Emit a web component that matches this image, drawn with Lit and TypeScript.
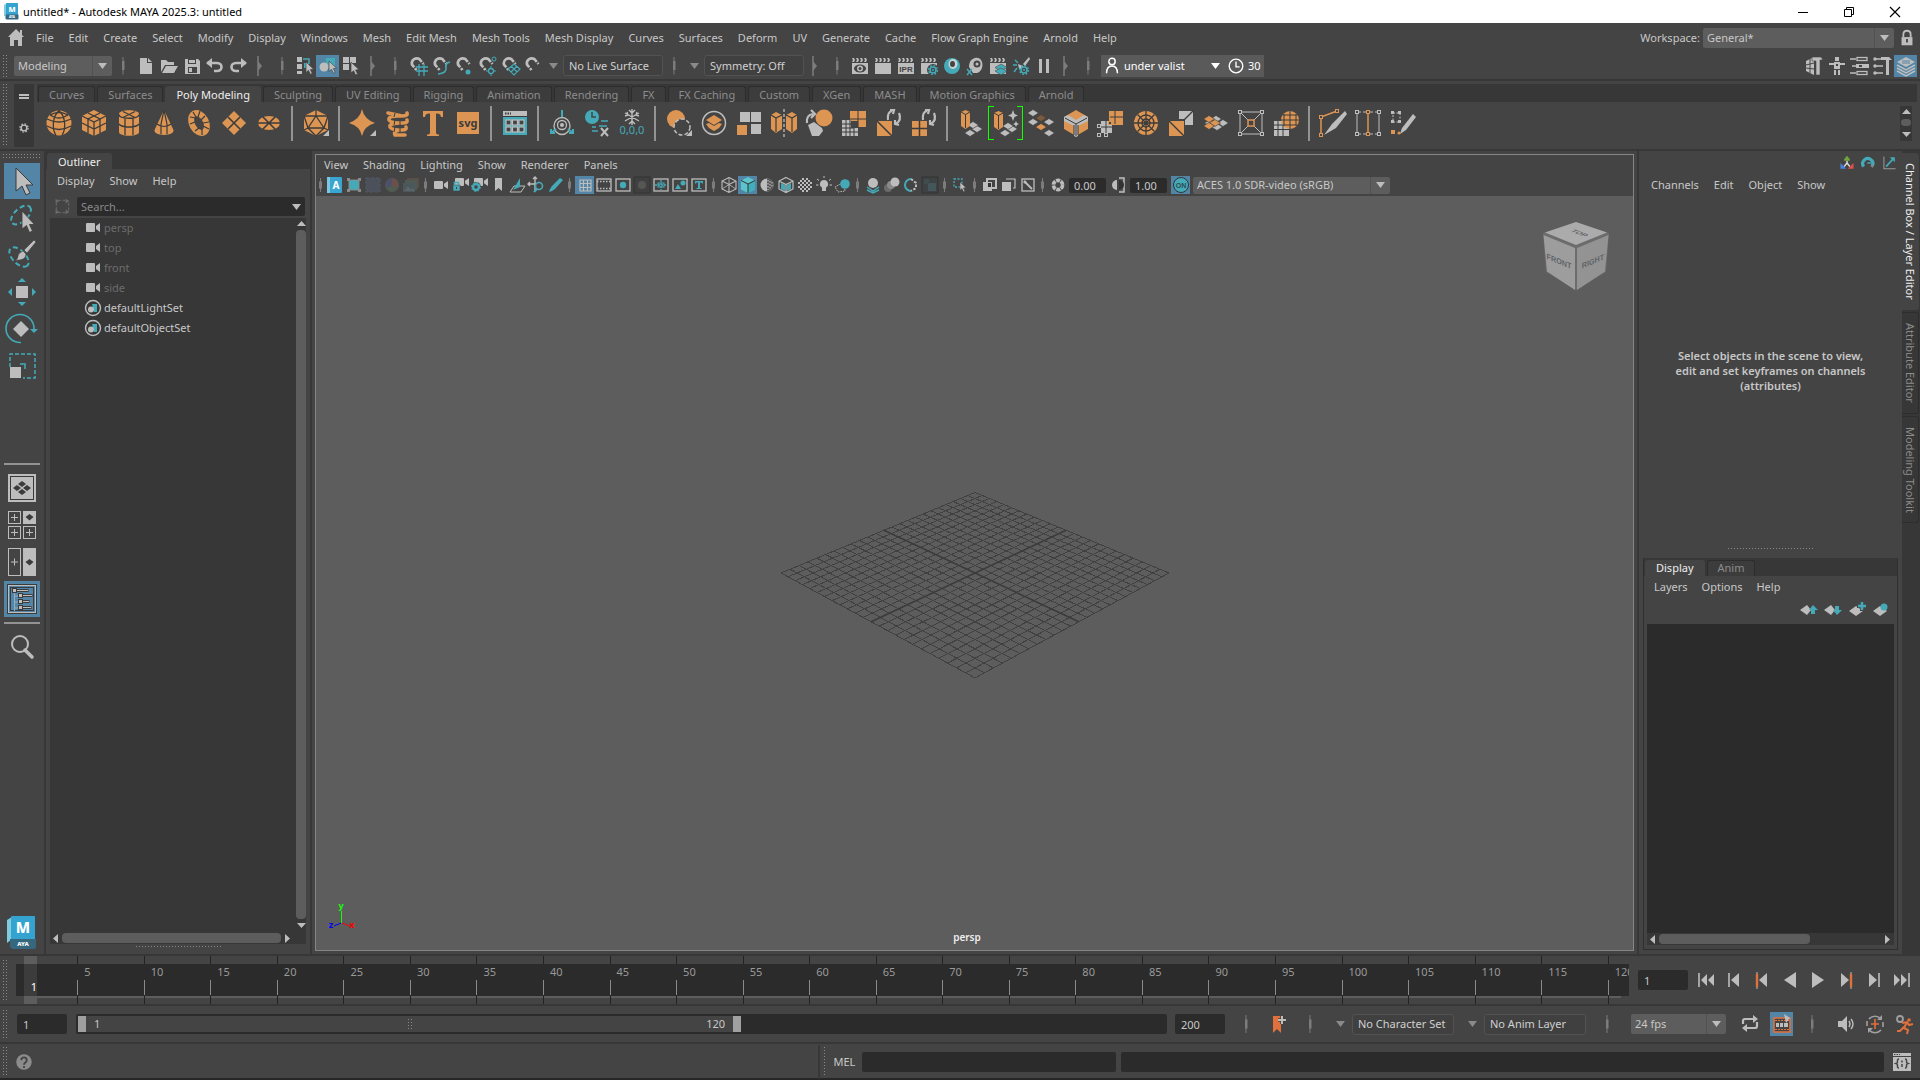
import { LitElement, html, svg, css, nothing } from "lit";
import type { TemplateResult, SVGTemplateResult } from "lit";
import { customElement, state } from "lit/decorators.js";
import { classMap } from "lit/directives/class-map.js";

const G = "#bdbdbd";
const O = "#dc9552";
const T = "#45aab8";
const D = "#3b3b3b";
const R = "#e0703c";

/* ---------- shared icon parts ---------- */
const clap = (extra: SVGTemplateResult) => svg`
  <rect x="3" y="8" width="16" height="11" fill=${G}/>
  <path d="M3 3h2l1 2H4zM7 3h2l1 2H8zM11 3h2l1 2h-2zM15 3h2l1 2h-2zM4 5h2L5 7H3zM8 5h2L9 7H7zM12 5h2l-1 2h-2zM16 5h2l-1 2h-2z" fill=${G}/>${extra}`;
const gear = (x: number, y: number, c: string) => svg`
  <circle cx=${x} cy=${y} r="3" fill="#444" stroke=${c} stroke-width="1.6"/>
  <circle cx=${x} cy=${y} r="4.4" fill="none" stroke=${c} stroke-width="1.4" stroke-dasharray="1.7 1.75"/>
  <circle cx=${x} cy=${y} r="1" fill=${c}/>`;
const magnet = (extra: SVGTemplateResult | typeof nothing) => svg`
  <path d="M9.500 15L5 9.500A4.900 4.900 0 0 1 12.500 4.200L16.500 9" fill="none" stroke=${G} stroke-width="2.700"/>
  <path d="M6 14l4-3M12.500 9.500l4-3" stroke="#444" stroke-width="1.200"/>${extra}`;
const cursor = (x: number, y: number, s = 1) => svg`
  <path d="M0 0v11l2.6-2.2 2 4.2 2-1-2-4 3.4-.4z" transform="translate(${x} ${y}) scale(${s})" fill=${G} stroke="#444" stroke-width=".7"/>`;
const cam = (x: number, y: number) => svg`
  <rect x=${x} y=${y} width="9" height="8" rx="1" fill=${G}/><path d="M${x + 14} ${y}v8l-4-2.800v-2.400z" fill=${G}/>`;
const tile = (x: number, y: number, c: string) => svg`<path d="M${x} ${y - 3.5}l5.500 3.500-5.500 3.500-5.500-3.500z" fill=${c} stroke=${D} stroke-width=".6"/>`;
const node = (x: number, y: number, c: string) => svg`<rect x=${x - 1.5} y=${y - 1.5} width="3" height="3" fill="#444" stroke=${c}/>`;
const pillar = (x: number, y: number) => svg`
  <path d="M${x} ${y + 2}l4.500-2 4.500 2v14l-4.500 3-4.500-3z" fill=${O}/><path d="M${x} ${y + 2}l4.500 2.500 4.500-2.500M${x + 4.5} ${y + 4}v14" fill="none" stroke=${D}/>`;
const cubeLine = (c: string, w = 1.2) => svg`<path d="M9 1.500l7 3.500v8l-7 3.500-7-3.500V5zM2 5l7 3.500L16 5M9 8.500V16.500" fill="none" stroke=${c} stroke-width=${w}/>`;

/* ---------- shelf icons, 28 x 28 ---------- */
const SHELF: Record<string, SVGTemplateResult> = {
  sphere: svg`<circle cx="14" cy="14" r="12.500" fill=${O}/><g fill="none" stroke=${D} stroke-width="1.300"><path d="M2 10q12 6 24 0M2 17q12 7 24 0M5 6q9-5 18 0"/><path d="M14 1.500C7 8 7 20 11 26.500M14 1.500C21 8 21 20 17 26.500M5 6q9 6 18 0"/></g>`,
  cube: svg`<path d="M14 1l12 6v14l-12 6-12-6V7z" fill=${O}/><g fill="none" stroke=${D} stroke-width="1.300"><path d="M2 7l12 6 12-6M14 13v14M8 4l12 6v14M20 4L8 10v14M2 14l12 6 12-6"/></g>`,
  cylinder: svg`<path d="M4 5c0-5 20-5 20 0v18c0 5-20 5-20 0z" fill=${O}/><g fill="none" stroke=${D} stroke-width="1.300"><path d="M4 5.500c0 5 20 5 20 0M4 15c3 4 17 4 20 0M10 9v17M18 9v17M8 2.500l12 6M20 2.500l-12 6"/></g>`,
  cone: svg`<path d="M14 1l9.500 20c1 6.500-20 6.500-19 0z" fill=${O}/><path d="M14 1l-3 14v10M14 1l3 14v10M7 15q7 5 14 0" fill="none" stroke=${D} stroke-width="1.200"/>`,
  torus: svg`<ellipse cx="14" cy="14" rx="7" ry="10.500" transform="rotate(-28 14 14)" fill="none" stroke=${O} stroke-width="6"/><g stroke=${D} stroke-width="1.200"><path d="M5 8l6 1M8 3l3 5M15 2l-2 6M20 7l-4 4M24 13l-6 1M24 20l-6-3M17 26l0-6M10 22l4-3M5 15l5-2"/></g>`,
  plane: svg`<path d="M14 2l12 12-12 12L2 14z" fill=${O}/><path d="M8 8l12 12M20 8L8 20" stroke=${D} stroke-width="1.600"/>`,
  disc: svg`<ellipse cx="14" cy="14" rx="11" ry="7" fill=${O}/><path d="M3 14h22M8 8l12 12M20 8L8 20" stroke=${D} stroke-width="1.600"/>`,
  platonic: svg`<path d="M14 1l12 6v14l-12 6-12-6V7z" fill=${O}/><g fill="none" stroke=${D} stroke-width="1.300"><path d="M14 7l8 12H6zM14 1v6M2 7l12 0 12 0M2 7l4 12-4 2M26 7l-4 12 4 2M6 19l8 8 8-8"/></g><path d="M27 21v6h-6z" fill=${G}/>`,
  supershape: svg`<path d="M13 0q2 10 13 14-11 3-13 13Q11 17 0 14 11 10 13 0z" fill=${O}/><path d="M27 21v6h-6z" fill=${G}/>`,
  helix: svg`<g fill="none" stroke=${O} stroke-width="3.600" stroke-linecap="round"><path d="M4 4l14 3q6 0 5-3M18 7q-14-1-13 4 1 3 14 3 5 0 4-3M17 14q-12 0-11 4 1 3 12 3 5 0 4-3M16 21q-7 1-5 5h10"/></g><g stroke=${D} stroke-width="1"><path d="M11 4l-1 4M16 12v5M11 11l-1 5M16 19v5M11 18l-1 5"/></g>`,
  type: svg`<path d="M4 2h20v6h-2c-.5-3-2-3.500-5-3.500v19c0 1.500 1 2 3 2V27H8v-1.500c2 0 3-.5 3-2v-19C8 4.500 6.500 5 6 8H4z" fill=${O}/>`,
  svg: svg`<rect x="3" y="3" width="22" height="22" fill=${O}/><text x="14" y="18" text-anchor="middle" font-size="11" font-weight="700" fill="#3b3b3b" font-family="Noto Sans, sans-serif">svg</text>`,
  panel: svg`<rect x="2" y="2" width="24" height="24" fill=${T}/><rect x="2" y="2" width="24" height="5" fill=${G}/><path d="M4 4.500h6" stroke=${D} stroke-width="2" stroke-dasharray="1.500 1"/><rect x="2" y="7" width="24" height="1" fill=${D}/><g fill="#444" stroke=${G} stroke-width="1.200"><rect x="5" y="11" width="5" height="5"/><rect x="11.500" y="11" width="5" height="5"/><rect x="18" y="11" width="5" height="5"/><rect x="5" y="18" width="5" height="5"/><rect x="11.500" y="18" width="5" height="5"/><rect x="18" y="18" width="5" height="5"/></g>`,
  pivot: svg`<ellipse cx="14" cy="17" rx="8" ry="8.500" fill="none" stroke=${G} stroke-width="1.300"/><path d="M14 1v7M8 20l-5 4M20 20l5 4M3 20v4h4M25 20v4h-4" stroke=${T} stroke-width="2" fill="none"/><circle cx="14" cy="16" r="4.500" fill="#444" stroke=${G} stroke-width="1.300"/><circle cx="14" cy="16" r="2" fill=${G}/>`,
  history: svg`<circle cx="9" cy="8" r="7" fill=${T}/><path d="M9 3v5h4" fill="none" stroke="#444" stroke-width="1.500"/><path d="M9 18h4M18 12h7M9 22h6M16 17h8" stroke=${T} stroke-width="1.500"/><path d="M18 19l7 8M25 19l-7 8" stroke=${G} stroke-width="2"/>`,
  freeze: svg`<g stroke=${G} stroke-width="1.400" fill="none"><path d="M14 0v16M7 4l14 8M21 4L7 12M11 1l3 3 3-3M11 15l3-3 3 3M7 7l3-1-1-3M21 7l-3-1 1-3"/></g><text x="14" y="25" text-anchor="middle" font-size="11" fill=${T} font-family="Noto Sans, sans-serif">0,0,0</text>`,
  combine: svg`<circle cx="11" cy="10" r="9" fill=${O}/><circle cx="17" cy="18" r="8" fill="#444" stroke=${G} stroke-width="1.500" stroke-dasharray="4 2"/><path d="M27 21v6h-6z" fill=${G}/>`,
  extract: svg`<circle cx="14" cy="14" r="11.500" fill="none" stroke=${G} stroke-width="1.500"/><path d="M14 6l8 5-8 5-8-5z" fill=${O}/><path d="M6 15l3-1 5 3 5-3 3 1-3 4-5 3-5-3z" fill=${O}/>`,
  separate: svg`<g fill=${G}><rect x="5" y="3" width="10" height="10"/><rect x="16" y="3" width="10" height="10"/><rect x="16" y="15" width="10" height="10"/></g><rect x="2" y="16" width="10" height="10" fill=${O}/>`,
  mirror: svg`<path d="M14 0v28" stroke=${G} stroke-width="1.300" stroke-dasharray="3 2"/><path d="M1 6l5-3 6 3v14l-6 4-5-4zM27 6l-5-3-6 3v14l6 4 5-4z" fill=${O}/><path d="M1 6l5 3 6-3M6 9v14M27 6l-5 3-6-3M22 9v14" fill="none" stroke=${D} stroke-width="1.200"/>`,
  smooth: svg`<circle cx="19" cy="9" r="8.500" fill=${O}/><path d="M3 16l6-3 8 6 1 3-4 5H7z" fill=${G}/><path d="M2 14q-1-8 6-9M6 1l4 4-4 4" fill="none" stroke=${G} stroke-width="2.200"/>`,
  reduce: svg`<path d="M10 2h16v16h-8v-6h-8z" fill=${O}/><path d="M18 2v16M10 10h16" stroke=${D}/><path d="M2 11h9v8h7v8H2z" fill=${G}/><path d="M6 11v16M10 11v16M14 19v8M2 15h10M2 19h12M2 23h16" stroke=${D}/>`,
  triangulate: svg`<rect x="2" y="12" width="15" height="15" fill=${O}/><path d="M2 12l15 15" stroke=${D} stroke-width="1.500"/><path d="M13 11q-1-8 4-9M15 1l4 0-1 4M24 4q3 7-3 11M24 16l-4-1 0-4" fill="none" stroke=${G} stroke-width="2.200"/>`,
  quad: svg`<rect x="2" y="12" width="15" height="15" fill=${O}/><path d="M9.500 12v15M2 19.500h15" stroke=${D} stroke-width="1.500"/><path d="M13 11q-1-8 4-9M15 1l4 0-1 4M24 4q3 7-3 11M24 16l-4-1 0-4" fill="none" stroke=${G} stroke-width="2.200"/>`,
  extrude: svg`${tile(13, 24, G)}${tile(20, 20, G)}${tile(16, 16, G)}${pillar(4, 1)}`,
  smart: svg`${tile(13, 24, G)}${tile(20, 20, G)}${tile(16, 17, G)}${pillar(2, 2)}<path d="M21 1l1.500 4 3.500 1.500-3.500 1.500L21 12l-1.500-4L16 6.500 19.500 5zM24 12l1 2 2 1-2 1-1 2-1-2-2-1 2-1z" fill=${G}/>`,
  bridge: svg`${tile(6, 4, G)}${tile(14, 9, "#7a5a3c")}${tile(22, 13, G)}${tile(6, 13, G)}${tile(14, 18, O)}${tile(22, 24, G)}`,
  bevel: svg`<path d="M14 1l12 7v12l-12 7-12-7V8z" fill=${O}/><path d="M2 8l4-2 8 5 8-5 4 2v4l-10 5v10l-2 1-2-1V17L2 12z" fill=${G}/><path d="M3 9l11 6 11-6M14 15v12M12 16v10M16 16v10" fill="none" stroke=${D}/>`,
  merge: svg`<path d="M12 2h14v14H15l-3-4z" fill=${O}/><path d="M18 2v13M13 8h13" stroke=${D}/><path d="M4 12h8v3h3v9H4z" fill=${G}/><path d="M9 12v12M4 18h11" stroke=${D}/>${node(2, 17, G)}${node(2, 26, G)}${node(9, 26, G)}${node(13, 14, O)}`,
  circularize: svg`<circle cx="14" cy="14" r="12" fill=${O}/><g fill="none" stroke=${D} stroke-width="1.300"><circle cx="14" cy="14" r="8"/><circle cx="14" cy="14" r="4"/><path d="M14 2v24M2 14h24M5.500 5.500l17 17M22.500 5.500l-17 17"/></g>`,
  fill: svg`<path d="M12 2h14v14h-8V10h-6z" fill=${G}/><rect x="2" y="12" width="15" height="15" fill=${O}/><path d="M2 12l15 15M17 11l9-9" stroke=${D} stroke-width="1.400"/>`,
  duplicate: svg`${tile(14, 10, G)}${tile(21, 14, G)}${tile(8, 14, G)}${tile(15, 18, G)}${tile(7, 10, O)}${tile(13, 14, O)}${tile(7, 17, O)}`,
  connect: svg`<path d="M3 3h22v22H3z" fill="none" stroke=${G}/><path d="M3 3l22 22M25 3L3 25" stroke=${G}/>${node(3, 3, G)}${node(25, 3, G)}${node(3, 25, G)}${node(25, 25, G)}<rect x="11" y="11" width="6" height="6" fill="#444" stroke=${O} stroke-width="1.500"/>`,
  project: svg`<path d="M2 12h15v15H2z" fill=${G}/><path d="M6 12v15M11 12v15M2 16h15M2 20.500h15" stroke=${D}/><circle cx="18" cy="11" r="9" fill=${O}/><path d="M18 2v18M9 11h18M12 5v12M24 5v12M11 6h14M11 16h14" stroke=${D}/>`,
  multicut: svg`<path d="M2 26V8l16-6" fill="none" stroke=${O} stroke-width="1.500"/>${node(2, 8, O)}${node(18, 2, O)}${node(2, 26, O)}<path d="M26 2l2 3-11 14-12 7 8-11z" fill=${G}/>`,
  insertloop: svg`<path d="M3 3v22M25 3v22" stroke=${G}/><path d="M3 3h22M3 25h22" stroke=${G} stroke-dasharray="4 2"/><path d="M14 3v22" stroke=${O} stroke-width="1.500"/>${node(3, 3, G)}${node(25, 3, G)}${node(3, 25, G)}${node(25, 25, G)}${node(14, 3, O)}${node(14, 25, O)}`,
  quaddraw: svg`<path d="M4 4h7v9H4z" fill="none" stroke=${G} stroke-dasharray="2 1.500"/><g fill=${G}><rect x="2" y="2" width="3" height="3"/><rect x="9" y="2" width="3" height="3"/><rect x="2" y="11" width="3" height="3"/><rect x="9" y="11" width="3" height="3"/></g><rect x="2" y="21" width="4" height="4" fill=${O}/><path d="M24 5l3 3-10 13-6 4 2-6z" fill=${G}/><circle cx="10" cy="24" r="1.500" fill=${O}/>`,
};

/* ---------- status line icons, 22 x 22 ---------- */
const SMALL: Record<string, SVGTemplateResult> = {
  home: svg`<path d="M11 2l8 8h-2v9h-4v-6H9v6H5v-9H3z" fill=${G}/><path d="M15 3h2v5h-2z" fill=${G}/>`,
  file: svg`<path d="M5 3h7v5h5v11H5z" fill=${G}/><path d="M13 3l4 4h-4z" fill=${G}/>`,
  open: svg`<path d="M3 17V5h5l2 2h6v3H7z" fill=${G}/><path d="M8 11h12l-4 7H4z" fill=${G}/>`,
  save: svg`<path d="M4 4h13l2 2v13H4z" fill=${G}/><rect x="7" y="4" width="8" height="5" fill="#444"/><rect x="8" y="5" width="6" height="3" fill=${G}/><rect x="7" y="12" width="9" height="6" fill="#444"/><rect x="8" y="13" width="3" height="4" fill=${G}/>`,
  undo: svg`<path d="M3 8h10c6 0 6 8 0 8h-3" fill="none" stroke=${G} stroke-width="2.600"/><path d="M2 8l6-5v10z" fill=${G}/>`,
  redo: svg`<path d="M19 8H9c-6 0-6 8 0 8h3" fill="none" stroke=${G} stroke-width="2.600"/><path d="M20 8l-6-5v10z" fill=${G}/>`,
  hierarchy: svg`<g fill=${G}><rect x="3" y="2" width="5" height="5"/><rect x="3" y="9" width="5" height="5"/><rect x="3" y="16" width="5" height="3"/></g><path d="M9 4h6v5" stroke=${T} stroke-width="1.500" fill="none"/><rect x="10" y="8" width="5" height="5" fill=${T}/>${cursor(12, 7, 0.95)}`,
  object: svg`<path d="M9 3h9v10H9z" fill=${T}/><circle cx="7" cy="12" r="4.500" fill=${G}/>${cursor(12, 6, 0.95)}`,
  component: svg`<g fill=${G}><rect x="3" y="2" width="6" height="6"/><rect x="10" y="2" width="6" height="6"/><rect x="3" y="9" width="6" height="6"/></g>${cursor(11, 7, 1)}`,
  snapgrid: magnet(svg`<path d="M9 12h12M9 16h12M12 9v12M17 9v12" stroke=${T} stroke-width="1.300"/>`),
  snapcurve: magnet(svg`<path d="M8 19q9-1 8-6t4-6" fill="none" stroke=${T} stroke-width="1.600"/>`),
  snappoint: magnet(svg`<circle cx="15" cy="17" r="2.500" fill=${T}/>`),
  snapcenter: magnet(svg`<circle cx="18" cy="4" r="2" fill="none" stroke=${T}/><circle cx="15" cy="16" r="2.500" fill="none" stroke=${T} stroke-width="1.300"/><path d="M15 11v3M15 18v3M10 16h3M17 16h3" stroke=${T}/>`),
  snapplane: magnet(svg`<path d="M9 14l6-5 6 5-6 6zM12 11l6 6M18 11l-6 6" fill="none" stroke=${T} stroke-width="1.200"/>`),
  makelive: magnet(nothing),
  renderview: clap(svg`<ellipse cx="11" cy="13.500" rx="6" ry="4" fill="#444"/><circle cx="11" cy="13.500" r="3" fill=${G}/><circle cx="11" cy="13.500" r="1.500" fill="#444"/>`),
  render: clap(svg``),
  ipr: clap(svg`<text x="11" y="17" text-anchor="middle" font-size="8" font-weight="700" fill="#444" font-family="Liberation Sans, sans-serif">IPR</text>`),
  rendersettings: clap(svg`<circle cx="15" cy="15" r="6" fill="#444"/>${gear(15, 15, T)}`),
  hypershade: svg`<circle cx="11" cy="11" r="8" fill=${T}/><ellipse cx="12" cy="9" rx="4.500" ry="5" fill="#c8d4d6"/><ellipse cx="11.500" cy="9" rx="2.500" ry="3" fill="#444"/>`,
  rendersetup: svg`<path d="M11 3c9-2 10 13 2 15H9L5 12C5 7 7 4 11 3z" fill=${G}/><circle cx="13" cy="9" r="3.500" fill="#444"/><circle cx="13" cy="9" r="1.500" fill=${G}/><path d="M3 14l5 6M8 14l-5 6" stroke=${T} stroke-width="1.500"/>`,
  layers: clap(svg`<path d="M14 9l6 3.500-6 3.500-6-3.500z" fill=${T} stroke="#444" stroke-width=".6"/><path d="M8 16l6-3 6 3-6 4z" fill=${T} stroke="#444" stroke-width=".6"/>`),
  lighteditor: svg`<path d="M19 2l-6 7 2 2 5-7zM8 9l5 2 1 4-5-1z" fill=${G}/><path d="M3 10h4M5 5l3 3M7 13l-3 4" stroke=${T} stroke-width="1.400"/>${gear(14, 15, T)}`,
  pause: svg`<path d="M6 4h3v14H6zM13 4h3v14h-3z" fill=${G}/>`,
  modeltool: svg`<path d="M3 6l8-4v18l-8-4z" fill=${G}/><path d="M3 10l8-2M3 13l8 1M7 4v14" stroke="#444"/><path d="M9 2h9l2 3h-3v15h-4V6h-4z" fill=${G} stroke="#444" stroke-width=".6"/>`,
  human: svg`<g fill=${G}><rect x="9" y="2" width="4" height="4"/><rect x="3" y="8" width="16" height="2"/><rect x="8" y="7" width="6" height="7"/><rect x="8" y="15" width="2" height="5"/><rect x="12" y="15" width="2" height="5"/></g><rect x="10" y="9" width="2" height="2" fill="#444"/>`,
  attributes: svg`<g fill="none" stroke=${G} stroke-width="1.300"><path d="M1 4h6M3 11h4M1 18h6"/><rect x="8" y="2.500" width="10" height="3"/><rect x="8" y="16.500" width="10" height="3"/></g><rect x="7" y="9" width="13" height="4" fill=${G}/><rect x="10" y="10" width="3" height="2" fill="#444"/>`,
  toolsettings: svg`<g stroke=${G} stroke-width="1.500" fill=${G}><path d="M3 4h6M3 11h8M3 18h8"/><circle cx="3" cy="4" r="1"/><circle cx="3" cy="11" r="1"/><circle cx="3" cy="18" r="1"/></g><path d="M9 2h8l3 3h-3v15h-3V5H9z" fill=${G}/>`,
  channelbox: svg`<path d="M11 2l9 5-9 5-9-5z" fill=${G}/><path d="M2 10l9 5 9-5M2 13l9 5 9-5M2 16l9 5 9-5" fill="none" stroke=${G} stroke-width="1.500"/><path d="M7 6h8M7 8h8" stroke="#5285a6"/>`,
};

/* ---------- viewport toolbar icons, 18 x 18 ---------- */
const frame = (extra: SVGTemplateResult) => svg`<rect x="2" y="3" width="14" height="12" fill="none" stroke=${G} stroke-width="1.300"/>${extra}`;
const VIEW: Record<string, SVGTemplateResult> = {
  arnold: svg`<rect x="1" y="1" width="15" height="16" rx="1" fill="#3aa5d0"/><path d="M1 1h3v16H1z" fill="#7cc8e2"/><text x="10" y="13" text-anchor="middle" font-size="10" font-weight="700" fill="#fff" font-family="Noto Sans, sans-serif">A</text>`,
  select: svg`<rect x="4" y="4" width="10" height="10" fill=${T} stroke="#8a8a8a"/><g fill="#8a8a8a"><rect x="2" y="2" width="3" height="3"/><rect x="13" y="2" width="3" height="3"/><rect x="2" y="13" width="3" height="3"/><rect x="13" y="13" width="3" height="3"/></g>`,
  paste: svg`<rect x="2" y="2" width="14" height="14" fill="#4b505a" stroke="#505b6a" stroke-dasharray="3 2"/>`,
  color: svg`<circle cx="9" cy="9" r="7" fill="#505c52"/><path d="M9 9V2a7 7 0 0 1 6 10z" fill="#6a4f4a"/><path d="M9 9L3 12.500A7 7 0 0 1 9 2z" fill="#504f68"/>`,
  stack: svg`<path d="M5 2h12v10H5z" fill="#584e4a"/><path d="M3 4h12v10H3z" fill="#4f5a52"/><path d="M1 7h12v9H1z" fill="#4a585e"/><path d="M2 15l4-5 3 4 2-2 2 3z" fill="#5c6468"/>`,
  camera: cam(2, 5),
  cameralock: svg`${cam(4, 2)}<rect x="2" y="9" width="7" height="6" fill=${T} stroke="#444" stroke-width=".6"/><path d="M3.500 9V6.500h4V9" fill="none" stroke=${T} stroke-width="1.500"/><rect x="5" y="11" width="1" height="2" fill="#444"/>`,
  cameragear: svg`${cam(4, 2)}<circle cx="6" cy="11" r="5" fill="#444"/><circle cx="6" cy="11" r="3" fill="none" stroke=${T} stroke-width="2.400"/><circle cx="6" cy="11" r="4.500" fill="none" stroke=${T} stroke-width="1" stroke-dasharray="1.600 1.900"/>`,
  bookmark: svg`<path d="M6 2h7v13l-3.500-3L6 15z" fill=${G}/>`,
  imageplane: svg`<path d="M2 16l4-6h11l-4 6z" fill="none" stroke=${G}/><path d="M5 14L12 2v9z" fill=${T}/>`,
  panzoom: svg`<path d="M8 1v14M1 8h10M6 3l2-2 2 2M3 6L1 8l2 2" fill="none" stroke=${G} stroke-width="1.400"/><circle cx="12" cy="10" r="3.500" fill="#444" stroke=${T} stroke-width="1.600"/><path d="M10 13l-3 3" stroke=${T} stroke-width="2"/>`,
  grease: svg`<path d="M14 2l3 2-8 9-3 2-3 1 1-3 2-3z" fill=${T}/>`,
  grid: svg`<path d="M4 4h11v11H4zM7.500 4v11M11.500 4v11M4 7.500h11M4 11.500h11" fill="none" stroke=${G} stroke-width="1.200"/>`,
  filmgate: frame(svg`<path d="M2 5.500h14M2 12.500h14" stroke=${G} stroke-width="1.500" stroke-dasharray="1.500 1.500"/>`),
  resgate: frame(svg`<circle cx="9" cy="9" r="3.200" fill=${T}/>`),
  gatemask: svg`<rect x="1" y="1" width="16" height="16" fill="#404040" stroke="#333"/><circle cx="9" cy="9" r="4" fill="#565656"/>`,
  fieldchart: frame(svg`<path d="M9 4v10M3 9h12" stroke=${T} stroke-dasharray="2 1" stroke-width="1.300"/><rect x="6" y="7" width="6" height="4" fill="none" stroke=${T}/>`),
  safeaction: frame(svg`<path d="M4 13l3-5 3 5z" fill=${T}/><circle cx="12" cy="7" r="2.500" fill=${T}/>`),
  safetitle: frame(svg`<path d="M5 5h8v2.500h-1l-.5-1H10V12h1.500v1h-5v-1H8V6.500H6.500l-.5 1H5z" fill=${T}/>`),
  wire: svg`${cubeLine(G, 1.1)}<path d="M9 1.500V8M2 13l7-4.500 7 4.500" stroke=${G} stroke-width=".8" fill="none"/>`,
  solid: svg`<path d="M9 1l7 3.500v9L9 17l-7-3.500v-9z" fill="#5cc4cc"/><path d="M9 8v9l7-3.500v-9z" fill="#3fb0b9"/><path d="M2 4.500L9 8l7-3.500M9 8v9" stroke="#333" fill="none"/>`,
  flat: svg`<circle cx="9" cy="9" r="6.500" fill=${G}/><path d="M9 2.500a6.500 6.500 0 0 1 0 13z" fill="#555"/><path d="M10 4v10M12 5v8M14 6v6" stroke=${G} stroke-width="1.200" stroke-dasharray="1.500 1.500"/>`,
  texture: svg`<path d="M9 1.500l7 3.500v8l-7 3.500-7-3.500V5z" fill="#444"/><path d="M4 7l4 2v6l-4-2zM14 7l-4 2v6l4-2z" fill=${T}/>${cubeLine(G, 1.2)}`,
  checker: svg`<circle cx="9" cy="9" r="6.500" fill="#444"/><path d="M5 4v10M9 4v12M13 4v10M7 2v14M11 2v14M3 6v6M15 6v6" stroke=${G} stroke-width="2" stroke-dasharray="2 2"/>`,
  light: svg`<path d="M9 4a4 4 0 0 1 2 7.500V15H7v-3.500A4 4 0 0 1 9 4z" fill=${G}/><path d="M9 0v2M2 3l2 1.500M16 3l-2 1.500M1 9h2.500M14.500 9H17" stroke=${G}/>`,
  shadow: svg`<path d="M1 11l9-5 1 9-7 1z" fill="none" stroke=${G} stroke-dasharray="1.500 1"/><circle cx="11" cy="8" r="4.800" fill=${T}/>`,
  ao: svg`<path d="M3 11l6 4 6-4M3 14l6 3 6-3" fill="none" stroke=${T} stroke-width="1.500"/><circle cx="9" cy="7" r="5" fill=${G}/>`,
  motion: svg`<circle cx="5" cy="12" r="4" fill="#6a6a6a"/><circle cx="8" cy="9" r="4" fill="#8a8a8a"/><circle cx="12" cy="6" r="4.500" fill=${G}/>`,
  msaa: svg`<path d="M9 3a6 6 0 0 0 0 12" fill="none" stroke=${T} stroke-width="2"/><path d="M9 3l5 4v5l-5 3" fill="none" stroke=${G} stroke-width="2" stroke-dasharray="2.500 1.500"/>`,
  dof: svg`<rect x="1" y="1" width="16" height="16" fill="#3f4243" stroke="#333"/><rect x="7" y="7" width="8" height="8" fill="#45565a"/><rect x="3" y="3" width="5" height="5" fill="#414c4e"/>`,
  isolate: svg`<rect x="3" y="3" width="8" height="8" fill="none" stroke=${T} stroke-dasharray="2 1.500" stroke-width="1.300"/>${cursor(9, 6, 0.75)}`,
  xray: svg`<rect x="2" y="6" width="9" height="9" fill=${G}/><rect x="6" y="3" width="9" height="9" fill="none" stroke=${G} stroke-width="2"/><rect x="7" y="7" width="3" height="4" fill="#333"/>`,
  xrayjoint: svg`<path d="M6 3h9v9h-2" fill="none" stroke=${G} stroke-width="1.200"/><rect x="2" y="6" width="9" height="9" fill=${G}/>`,
  xrayactive: svg`<rect x="3" y="3" width="12" height="12" fill="none" stroke=${G} stroke-width="1.300"/><path d="M5 5l8 8" stroke=${G} stroke-width="1.800"/><circle cx="6" cy="6" r="1.500" fill=${G}/>`,
  aperture: svg`<circle cx="9" cy="9" r="4.600" fill="none" stroke=${G} stroke-width="3.600" stroke-dasharray="4 .8"/>`,
  gamma: svg`<path d="M7 4a5 5 0 0 0 0 10z" fill=${G}/><path d="M9 2h5v14H9" fill="#555" stroke=${G} stroke-width="1.500"/><path d="M9 4a5 5 0 0 1 0 10z" fill="#333"/>`,
  on: svg`<circle cx="9" cy="9" r="7.500" fill=${T} stroke="#333"/><text x="9" y="12" text-anchor="middle" font-size="7" font-weight="700" fill="#2b4a50" font-family="Liberation Sans, sans-serif">ON</text>`,
};

/* ---------- tool box icons, 36 x 36 ---------- */
const lasso = svg`<ellipse cx="17" cy="15" rx="12" ry="6.500" transform="rotate(-42 17 15)" fill="none" stroke=${T} stroke-width="2" stroke-dasharray="5 3"/>`;
const TOOLS: Record<string, SVGTemplateResult> = {
  select: svg`<path d="M12 5v23l6-5 4 9 4-2-4-8h7z" fill=${G} stroke=${D} stroke-width="1"/>`,
  lasso: svg`${lasso}<path d="M18 11v18l4.500-3.500 3 7 3-1.500-3-6.500h5z" fill=${G} stroke=${D} stroke-width=".8"/>`,
  paint: svg`<ellipse cx="15" cy="20" rx="12" ry="6.500" transform="rotate(45 15 20)" fill="none" stroke=${T} stroke-width="2" stroke-dasharray="5 3"/><path d="M30 3l2 2-9 11-3-3zM19 14l3 3q0 7-11 6 3-1 3-4t5-5z" fill=${G} stroke=${D} stroke-width=".6"/>`,
  move: svg`<rect x="12" y="12" width="12" height="12" fill=${G}/><path d="M18 4l4 4h-8zM18 32l4-4h-8zM4 18l4-4v8zM32 18l-4-4v8z" fill=${T}/>`,
  rotate: svg`<path d="M17 31.500A14 14 0 1 1 30 18" fill="none" stroke=${T} stroke-width="1.600"/><path d="M26 18h8l-4 4z" fill=${T}/><path d="M17 10l8 8-8 8-8-8z" fill=${G}/>`,
  scale: svg`<path d="M6 19V6h25v24H19" fill="none" stroke=${T} stroke-width="1.500" stroke-dasharray="4 2"/><path d="M16 16h5v5" fill="none" stroke=${T} stroke-width="1.500"/><rect x="6" y="19" width="11" height="11" fill=${G}/>`,
  single: svg`<rect x="4" y="4" width="28" height="28" fill=${G}/><rect x="6.500" y="6.500" width="23" height="23" fill="none" stroke=${D}/><g fill=${D}><path d="M18 11l4 3-4 3-4-3zM18 19l4 3-4 3-4-3zM13 15l4 3-4 3-4-3zM23 15l4 3-4 3-4-3z"/></g>`,
  four: svg`<rect x="19" y="4" width="13" height="13" fill=${G}/><path d="M25.500 7l4 3-4 3.500-4-3.500z" fill=${D}/><g fill="none" stroke=${G}><rect x="4.500" y="4.500" width="12" height="12"/><rect x="4.500" y="19.500" width="12" height="12"/><rect x="19.500" y="19.500" width="12" height="12"/><path d="M7 10.500h7M10.500 7v7M7 25.500h7M10.500 22v7M22 25.500h7M25.500 22v7"/></g>`,
  two: svg`<rect x="19" y="4" width="13" height="28" fill=${G}/><path d="M25.500 15l4 3-4 3.500-4-3.500z" fill=${D}/><rect x="4.500" y="4.500" width="12" height="27" fill="none" stroke=${G}/><path d="M7 18h7M10.500 14.500v7" stroke=${G}/>`,
  outliner: svg`<rect x="4" y="4" width="28" height="28" fill="none" stroke=${D} stroke-width="2"/><rect x="4.500" y="4.500" width="27" height="27" fill="none" stroke=${G}/><rect x="6.500" y="6.500" width="23" height="23" fill="none" stroke=${D}/><path d="M10.500 12v18M11 15h5M11 21h5M11 27h5" stroke="#8fb0c4"/><g fill=${G} stroke=${D}><rect x="8.500" y="7.500" width="4" height="4"/><rect x="14.500" y="12.500" width="4" height="4"/><rect x="14.500" y="18.500" width="4" height="4"/><rect x="14.500" y="24.500" width="4" height="4"/><rect x="13" y="8.500" width="11" height="2"/><rect x="19" y="13.500" width="9" height="2"/><rect x="19" y="19.500" width="6" height="2"/><rect x="19" y="25.500" width="8" height="2"/></g>`,
  search: svg`<circle cx="16" cy="15" r="8" fill="none" stroke=${G} stroke-width="2"/><path d="M21 21l7 7" stroke=${G} stroke-width="3.500" stroke-linecap="round"/>`,
};

/* ---------- other icons ---------- */
const MISC: Record<string, SVGTemplateResult> = {
  start: svg`<path d="M4 4v14" stroke=${G} stroke-width="1.600"/><path d="M12 5v12l-6-6zM19 5v12l-6-6z" fill=${G}/>`,
  back: svg`<path d="M6 4v14" stroke=${G} stroke-width="1.600"/><path d="M16 4v14l-8-7z" fill=${G}/>`,
  prevkey: svg`<path d="M6 5v13" stroke=${R} stroke-width="2.400"/><path d="M6 3v2M6 18v2" stroke=${G}/><path d="M16 4v14l-8-7z" fill=${G}/>`,
  playback: svg`<path d="M17 3v16L5 11z" fill=${G}/>`,
  play: svg`<path d="M5 3v16l12-8z" fill=${G}/>`,
  nextkey: svg`<path d="M16 5v13" stroke=${R} stroke-width="2.400"/><path d="M16 3v2M16 18v2" stroke=${G}/><path d="M6 4v14l8-7z" fill=${G}/>`,
  forward: svg`<path d="M16 4v14" stroke=${G} stroke-width="1.600"/><path d="M6 4v14l8-7z" fill=${G}/>`,
  end: svg`<path d="M18 4v14" stroke=${G} stroke-width="1.600"/><path d="M10 5v12l6-6zM3 5v12l6-6z" fill=${G}/>`,
  loop: svg`<path d="M4 11V8q0-2 2-2h9M18 9v4q0 2-2 2H7" fill="none" stroke=${G} stroke-width="2.200"/><path d="M14 2l5 4-5 4zM8 11l-5 4 5 4z" fill=${G}/>`,
  cached: svg`<rect x="3" y="5" width="16" height="14" fill="#444" stroke=${R} stroke-width="1.600"/><path d="M4 7.500h14M4 16.500h14" stroke=${R} stroke-dasharray="2 1"/><g fill=${G}><rect x="5" y="10" width="3" height="4"/><rect x="9" y="10" width="3" height="4"/><rect x="13" y="10" width="4" height="4"/><path d="M13 1l6 4-4 5z"/></g>`,
  speaker: svg`<path d="M3 8h4l5-5v16l-5-5H3z" fill=${G}/><path d="M14 8q2 3 0 6M16 6q4 5 0 10" fill="none" stroke=${G} stroke-width="1.400"/>`,
  evaluate: svg`<path d="M5 6a8 8 0 0 1 12 0M17 17a8 8 0 0 1-12 0M3 13V8M19 9v5" fill="none" stroke="#a0a0a0" stroke-width="1.600"/><path d="M11 6v10M7 11h8" stroke=${R} stroke-width="1.600"/><path d="M18 2v5h-5zM4 20v-5h5z" fill="#a0a0a0"/>`,
  runner: svg`<circle cx="7" cy="6" r="3" fill="none" stroke="#a0a0a0" stroke-width="1.800"/><g stroke=${R} stroke-width="2" fill="none"><path d="M9 10l5-1 2 3 4-1M14 9l-3 6 4 2-1 4M11 14l-4 4H4"/></g><circle cx="16" cy="7" r="1.800" fill=${R}/>`,
  bookmarkadd: svg`<path d="M6 3h8v17l-4-4-4 4z" fill=${R}/><path d="M15 3v8M11 7h8" stroke=${D} stroke-width="3.500"/><path d="M15 3v8M11 7h8" stroke=${G} stroke-width="2"/>`,
  help: svg`<circle cx="11" cy="11" r="8.500" fill="#8c8c8c"/><path d="M8 9q0-3 3-3t3 3q0 1.500-1.500 2.500T11 14M11 15.500v2" fill="none" stroke="#444" stroke-width="2"/>`,
  script: svg`<rect x="2" y="2" width="18" height="18" fill=${G}/><path d="M3 3.500h6" stroke="#444" stroke-dasharray="1.500 1"/><path d="M2 5.500h18" stroke="#444"/><path d="M8 8Q6 8 6.500 11q0 1-1.500 1.500 1.500.5 1.500 1.500Q6 17 8 17M14 8q2 0 1.500 3 0 1 1.500 1.500-1.500.5-1.500 1.500Q16 17 14 17M11 9.500v2M11 13v3" fill="none" stroke="#444" stroke-width="1.500"/>`,
  lock: svg`<path d="M7 10V7q0-4 4-4t4 4v3" fill="none" stroke=${G} stroke-width="2"/><rect x="5" y="10" width="12" height="9" fill=${G}/><path d="M11 12v4" stroke="#444" stroke-width="2"/>`,
  gear: svg`<circle cx="11" cy="11" r="3.500" fill="none" stroke=${G} stroke-width="1.800"/><circle cx="11" cy="11" r="5" fill="none" stroke=${G} stroke-width="1.500" stroke-dasharray="2 1.930"/>`,
  manip: svg`<path d="M11 11v-3M11 11l-4 5M11 11l4 5" stroke="#ddd" stroke-width="2"/><path d="M11 1l4 5v2H7V6z" fill="#6fa53c"/><path d="M2 11v8h8z" fill="#4a80e0"/><path d="M20 11v8h-8z" fill="#e0504a"/>`,
  speed: svg`<path d="M5 16A7 7 0 1 1 17 15" fill="none" stroke=${T} stroke-width="4.500"/><path d="M18 12v6l-4-3z" fill="#888"/><path d="M10 11h5" stroke=${T} stroke-width="2"/>`,
  hyper: svg`<path d="M4 2v17h16" fill="none" stroke="#999" stroke-width="1.400"/><path d="M7 16l9-10" stroke=${T} stroke-width="2.200"/><path d="M12 3h7v7z" fill=${T}/>`,
  layerup: svg`<path d="M2 11l7-5 4 5-4 5z" fill=${G}/><path d="M15 6l5 5h-3v4h-4v-4h-2z" fill=${T}/>`,
  layerdown: svg`<path d="M2 11l7-5 4 5-4 5z" fill=${G}/><path d="M15 16l5-5h-3V7h-4v4h-2z" fill=${T}/>`,
  layeradd: svg`<path d="M3 12l7-5 7 5-7 5z" fill=${G}/><path d="M16 3v9M11 7h9" stroke="#444" stroke-width="4"/><path d="M16 3v8M12 7h8" stroke=${T} stroke-width="2.400"/>`,
  layersel: svg`<path d="M3 12l7-5 7 5-7 5z" fill=${G}/><circle cx="14" cy="8" r="3.500" fill=${T}/>`,
  person: svg`<circle cx="11" cy="6" r="3.500" fill="none" stroke="#fff" stroke-width="1.600"/><path d="M5 19q0-8 6-8t6 8" fill="none" stroke="#fff" stroke-width="1.600"/>`,
  clock: svg`<circle cx="11" cy="11" r="7.500" fill="none" stroke="#fff" stroke-width="1.500"/><path d="M11 6v6h4" fill="none" stroke="#fff" stroke-width="1.500"/>`,
  filter: svg`<path d="M5 3h12M5 19h12M3 6v10M19 6v10" stroke="#777" stroke-dasharray="4 2"/><path d="M2 1l5 3-5 3zM15 1l5 3-5 3zM2 15l5 3-5 3zM15 15l5 3-5 3z" fill="#6a6a6a"/>`,
  camnode: svg`<rect x="4" y="6" width="9" height="9" rx="1" fill=${G}/><path d="M18 6v9l-4-3V9z" fill=${G}/>`,
  setnode: svg`<circle cx="11" cy="11" r="7.500" fill="none" stroke=${G} stroke-width="1.400"/><path d="M10 7h5v8h-3z" fill=${T}/><circle cx="9" cy="12.500" r="3" fill=${G}/>`,
};

const icon = (set: Record<string, SVGTemplateResult>, name: string, box: number, size = box) =>
  html`<svg class="ic" viewBox="0 0 ${box} ${box}" width=${size} height=${size} aria-hidden="true">${set[name]}</svg>`;

const down = (fill = "#bdbdbd") =>
  html`<svg class="ic" width="9" height="6" viewBox="0 0 9 6" aria-hidden="true"><path d="M0 0h9L4.500 6z" fill=${fill} /></svg>`;
const arrow = (dir: string) => {
  const d: Record<string, string> = { up: "M0 5h9L4.500 0z", down: "M0 0h9L4.500 5z", left: "M6 0v9L1 4.500z", right: "M1 0v9l5-4.500z" };
  return html`<svg class="ic" width="9" height="9" viewBox=${dir === "up" || dir === "down" ? "0 -2 9 9" : "-1 0 9 9"} aria-hidden="true"><path d=${d[dir]} fill="#bdbdbd" /></svg>`;
};

const MENUS = ["File", "Edit", "Create", "Select", "Modify", "Display", "Windows", "Mesh", "Edit Mesh", "Mesh Tools", "Mesh Display", "Curves", "Surfaces", "Deform", "UV", "Generate", "Cache", "Flow Graph Engine", "Arnold", "Help"];
const SHELF_TABS = ["Curves", "Surfaces", "Poly Modeling", "Sculpting", "UV Editing", "Rigging", "Animation", "Rendering", "FX", "FX Caching", "Custom", "XGen", "MASH", "Motion Graphics", "Arnold"];
const SHELF_ITEMS = "sphere cube cylinder cone torus plane disc | platonic | supershape helix type svg | panel | pivot history freeze | combine extract separate mirror smooth reduce triangulate quad | extrude smart bridge bevel merge circularize fill duplicate connect project | multicut insertloop quaddraw".split(" ");
const VIEW_ITEMS = "| arnold select paste color stack | camera cameralock cameragear bookmark imageplane panzoom grease | grid filmgate resgate gatemask fieldchart safeaction safetitle | wire solid flat texture checker light shadow | ao motion msaa dof | isolate | xray xrayjoint xrayactive | aperture".split(" ");
const SIDE_TABS = ["Channel Box / Layer Editor", "Attribute Editor", "Modeling Toolkit"];
const NODES = [
  { name: "persp", kind: "camera" },
  { name: "top", kind: "camera" },
  { name: "front", kind: "camera" },
  { name: "side", kind: "camera" },
  { name: "defaultLightSet", kind: "set" },
  { name: "defaultObjectSet", kind: "set" },
];
const FRAMES = Array.from({ length: 24 }, (_, i) => (i + 1) * 5);

/* Perspective projection of the ground plane; u and v run from -1 to 1. */
const project = (u: number, v: number): string => {
  const s = u + v;
  const w = 1 - 0.066 * s;
  return `${(200 + (97 * (u - v)) / w).toFixed(1)} ${((573 + 7.72 * s) / w - 573 + 110).toFixed(1)}`;
};
const HALF = 12;
const gridPath = Array.from({ length: HALF * 2 + 1 }, (_, i) => (i - HALF) / HALF)
  .map((t) => `M${project(t, -1)}L${project(t, 1)}M${project(-1, t)}L${project(1, t)}`)
  .join("");
const axisPath = `M${project(0, -1)}L${project(0, 1)}M${project(-1, 0)}L${project(1, 0)}`;

@customElement("app-root")
export class AppRoot extends LitElement {
  @state() private shelf = "Poly Modeling";
  @state() private tool = "select";

  static styles = css`
    :host {
      display: flex;
      flex-direction: column;
      height: 100vh;
      overflow: hidden;
      background: #444;
      color: #c8c8c8;
      font: 11px/14px "Noto Sans", "Open Sans", sans-serif;
    }
    * { box-sizing: border-box; }
    button, input, select {
      font: inherit;
      color: inherit;
      background: none;
      border: 0;
      margin: 0;
      padding: 0;
      border-radius: 0;
      outline: none;
    }
    button { display: flex; align-items: center; justify-content: center; flex: none; white-space: nowrap; }
    select { appearance: none; flex: 1; min-width: 0; }
    h1, p, ul { margin: 0; padding: 0; list-style: none; font: inherit; }
    .ic { display: block; flex: none; overflow: visible; }
    .grow { flex: 1; }
    .row { display: flex; align-items: center; }

    .title { height: 23px; flex: none; background: #fff; color: #000; padding: 0 2px 0 4px; }
    .title h1 { margin-left: 4px; }
    .title button { width: 46px; height: 18px; }
    .menubar { height: 29px; flex: none; padding: 0 3px 0 4px; }
    .home { width: 24px; margin-right: 8px; }
    .menus { display: flex; gap: 15px; }
    .workspace { gap: 3px; }
    .combo { display: flex; align-items: center; height: 20px; background: #5d5d5d; border-radius: 2px; padding-left: 4px; color: #c8c8c8; }
    .combo .drop { display: flex; align-items: center; justify-content: center; align-self: stretch; width: 20px; border-left: 1px solid #515151; }
    .w-mode { width: 98px; }
    .w-space { width: 191px; }
    .w-view { width: 197px; height: 17px; }
    .w-fps { width: 95px; margin-left: 3px; }

    .status { height: 29px; flex: none; padding: 0 3px; border-bottom: 2px solid #373737; }
    .grip { width: 5px; height: 22px; flex: none; background: conic-gradient(from 270deg at 1px 1px, #8a8a8a 90deg, transparent 0) 0 0 / 3px 3px; }
    .hgrip { width: 85px; height: 1px; flex: none; align-self: center; background: conic-gradient(from 270deg at 1px 1px, #8a8a8a 90deg, transparent 0) 0 0 / 3px 3px; }
    .status .grip { margin-right: 6px; }
    .tool { width: 23px; height: 22px; }
    .on { background: #5285a6; }
    .sep { display: flex; justify-content: center; align-items: center; width: 22px; height: 20px; flex: none; }
    .sep::before { content: ""; width: 3px; height: 18px; background: #7c7c7c; clip-path: polygon(33% 0, 66% 0, 66% 25%, 100% 25%, 100% 75%, 66% 75%, 66% 100%, 33% 100%, 33% 75%, 0 75%, 0 25%, 33% 25%); }
    .end { display: flex; justify-content: center; width: 22px; flex: none; }
    .mini { width: 19px; height: 20px; }
    .field { width: 100px; height: 21px; border: 1px solid #525252; border-radius: 3px; background: #404040; padding: 0 5px; color: #d0d0d0; justify-content: flex-start; }
    .user { height: 22px; background: #5a5a5a; color: #fff; padding: 0 3px 0 1px; gap: 6px; margin-left: 2px; }
    .user .who { width: 85px; text-align: left; }
    .user button { gap: 2px; }

    .shelf { display: flex; flex: none; height: 70px; padding: 3px 3px 2px; border-bottom: 2px solid #373737; }
    .shelf > .grip { height: 62px; margin-right: 6px; }
    .shelf-side { width: 20px; flex: none; background: #373737; display: flex; flex-direction: column; align-items: center; justify-content: space-around; margin-right: 3px; }
    .shelf-side .bars { width: 10px; height: 5px; border: solid #bdbdbd; border-width: 2px 0; }
    .shelf-main { flex: 1; min-width: 0; }
    .tabs { display: flex; align-items: flex-end; gap: 2px; height: 18px; background: #373737; padding-left: 1px; }
    .tab { height: 16px; padding: 0 10px; border: 1px solid #2d2d2d; border-bottom: 0; border-radius: 3px 3px 0 0; background: #3c3c3c; color: #8c8c8c; }
    .tab.cur { background: #444; border-color: #444; color: #eee; }
    .shelf-items { display: flex; align-items: center; height: 42px; padding: 0 5px 0 4px; }
    .shelf-items button { width: 35px; height: 35px; }
    .bar { width: 2px; height: 35px; background: #939393; margin: 0 5px; flex: none; }
    .smart { position: relative; }
    .smart::before, .smart::after { content: ""; position: absolute; inset: 0 29px 1px 0; border: 1px solid #1f0; border-right: 0; }
    .smart::after { inset: 0 0 1px 29px; border: 1px solid #1f0; border-left: 0; }
    .shelf-scroll { width: 12px; height: 35px; background: #373737; display: flex; flex-direction: column; align-items: center; justify-content: space-around; }
    .knob { width: 10px; height: 7px; border-radius: 4px; background: #5d5d5d; }

    .main { flex: 1; min-height: 0; display: grid; grid-template-columns: 46px 266px 1fr 265px 18px; border-bottom: 2px solid #373737; }
    .toolbox { display: flex; flex-direction: column; align-items: center; gap: 1px; padding: 3px 4px 4px; border-right: 2px solid #373737; }
    .toolbox .grip { width: 38px; height: 5px; margin-bottom: 3px; }
    .toolbox button { width: 36px; height: 36px; }
    .toolbox .rule { width: 36px; height: 2px; background: #939393; flex: none; margin: 4px 0; }
    .toolbox .gap { height: 73px; flex: none; }

    .outliner { display: flex; flex-direction: column; border-right: 2px solid #373737; min-height: 0; }
    .outliner .menus { padding: 0 11px; height: 24px; align-items: center; }
    .search-row { gap: 6px; padding: 0 5px 0 8px; height: 23px; margin-top: 2px; }
    .search { flex: 1; height: 19px; background: #2b2b2b; border-radius: 2px; padding: 0 4px; }
    .search input { flex: 1; min-width: 0; }
    .search input::placeholder { color: #8a8a8a; opacity: 1; }
    .tree { flex: 1; min-height: 0; display: grid; grid-template: 1fr 12px / 1fr 10px; margin: 0 4px; background: #373737; }
    .tree ul { padding: 0 0 0 32px; }
    .tree li { display: flex; align-items: center; height: 20px; }
    .tree li.dim { color: #6c6c6c; }
    .vscroll { display: flex; flex-direction: column; align-items: center; padding: 1px 0 2px; gap: 2px; }
    .vscroll .thumb { width: 10px; flex: 1; border-radius: 4px; background: #5d5d5d; }
    .hscroll { display: flex; align-items: center; padding: 0 4px 0 1px; gap: 2px; height: 12px; }
    .hscroll .thumb { flex: 1; height: 10px; border-radius: 4px; background: #5d5d5d; }
    .outliner .hgrip { margin: 2px 0 7px; }

    .viewport { display: flex; flex-direction: column; margin: 3px; border: 1px solid #858585; min-width: 0; }
    .viewport .menus { padding: 0 8px; height: 20px; align-items: center; }
    .vtools { height: 21px; padding-bottom: 1px; }
    .vtools button { width: 19px; height: 18px; }
    .vtools .sep { width: 11px; height: 18px; }
    .vtools .sep:first-child { width: 9px; }
    .vtools .sep::before { height: 14px; }
    .num { width: 37px; height: 15px; background: #2b2b2b; border-radius: 2px; padding-left: 5px; }
    .vtools .num { margin: 0 3px 0 2px; }
    .vtools .toggle { margin: 0 3px 0 1px; }
    .canvas { flex: 1; min-height: 0; position: relative; background: #5d5d5d; display: flex; align-items: center; justify-content: center; }
    .viewcube { position: absolute; top: 21px; right: 19px; }
    .gizmo { position: absolute; left: 8px; bottom: 11px; }
    .camname { position: absolute; bottom: 6px; left: 0; right: 15px; text-align: center; color: #eee; font-weight: 600; font-size: 10px; }

    .channel { display: grid; grid-template-rows: 1fr 1fr; border-left: 2px solid #373737; min-height: 0; }
    .channel .menus { padding: 0 12px; height: 22px; align-items: center; }
    .chan-top { display: flex; flex-direction: column; min-height: 0; }
    .chan-icons { justify-content: flex-end; height: 23px; padding-right: 3px; }
    .chan-icons button { width: 21px; }
    .msg { flex: 1; display: flex; align-items: center; justify-content: center; text-align: center; font-weight: 600; line-height: 15px; padding: 0 34px 2px; }
    .chan-top .hgrip { margin-bottom: 4px; }
    .layers { display: flex; flex-direction: column; margin: 5px 4px 4px; border: 1px solid #2f2f2f; border-top: 0; min-height: 0; }
    .channel .layers .menus { padding: 0 10px; height: 23px; gap: 14px; }
    .layer-icons { justify-content: flex-end; gap: 2px; padding: 0 5px 3px; height: 25px; }
    .layer-list { flex: 1; margin: 0 3px; background: #2b2b2b; }
    .layers .hscroll { margin: 0 3px 4px; background: #373737; padding-right: 2px; }
    .layers .hscroll .thumb { flex: none; width: 62%; margin-right: auto; }

    .side { background: #373737; display: flex; flex-direction: column; gap: 2px; padding: 2px 1px 0 0; }
    .side button { writing-mode: vertical-rl; padding: 10px 0; width: 17px; border: 1px solid #2d2d2d; border-left: 0; border-radius: 0 3px 3px 0; color: #8c8c8c; }
    .side .cur { background: #444; border-color: #444; color: #eee; padding: 9px 0; }

    .time { display: flex; flex: none; height: 50px; padding-left: 3px; border-bottom: 2px solid #373737; }
    .time > .grip { height: 40px; margin: 4px 8px 0 0; }
    .track { flex: 1; min-width: 0; overflow: hidden; padding: 0 8px; background: linear-gradient(#2b2b2b, #2b2b2b) 0 8px / 100% 32px no-repeat; }
    .frames { position: relative; height: 48px; display: grid; grid-template-columns: 4fr repeat(23, 5fr) 1fr; background: linear-gradient(#5d5d5d, #5d5d5d) 0 40px / 100% 2px no-repeat; }
    .frame { min-width: 0; padding: 9px 0 0 7px; color: #999; background: linear-gradient(#222 0 8px, transparent 8px 24px, #8a8a8a 24px 39px, transparent 39px 40px, #222 40px) 0 0 / 1px 100% no-repeat; white-space: nowrap; }
    .now { position: absolute; left: 0; top: 0; bottom: 0; width: 13px; background: linear-gradient(#5d5d5d 0 8px, #3c3c3c 8px 40px, #5d5d5d 40px); display: flex; align-items: flex-end; justify-content: flex-end; padding-bottom: 10px; color: #fff; }
    .box { width: 50px; height: 20px; background: #2b2b2b; border-radius: 2px; padding-left: 6px; flex: none; }
    .play { gap: 5px; padding: 0 7px 0 9px; }
    .play button { width: 23px; }
    .play .box { margin-right: 1px; }

    .range { display: flex; align-items: center; flex: none; height: 38px; padding: 0 2px 0 3px; border-bottom: 2px solid #373737; }
    .range > .grip { height: 29px; margin-right: 9px; }
    .slider { flex: 1; min-width: 0; height: 20px; margin: 0 8px 0 9px; padding: 2px; background: #2b2b2b; border-radius: 2px; }
    .span { width: 61%; height: 16px; background: #444; }
    .handle { width: 8px; height: 16px; background: #a0a0a0; flex: none; }
    .span .grip { width: 4px; height: 10px; }
    .span .lo { flex: 1 1 0; padding-left: 8px; }
    .span .hi { flex: 1 1 0; padding-right: 8px; text-align: right; }
    .range .sep { width: 42px; }
    .range .last { width: 38px; }
    .range .mini { width: 18px; margin-right: 3px; }
    .range .field + .mini { width: 27px; padding-left: 9px; }
    .range .field { width: 102px; }
    .range .mark { width: 22px; }
    .range .ricon { width: 29px; height: 24px; }
    .range .loop { margin: 0 6px 0 9px; }
    .range .cache { width: 23px; height: 24px; }

    .cmd { display: flex; align-items: center; flex: none; height: 36px; padding: 1px 7px 0 3px; border-bottom: 2px solid #262626; }
    .cmd > .grip { height: 29px; margin-right: 6px; }
    .cmd .helpline { flex: 803 1 0; }
    .cmd .split { width: 2px; height: 34px; background: #373737; flex: none; }
    .cmd .split + .grip { width: 2px; margin: 0 8px 0 4px; }
    .cmd .entry { flex: 253 1 0; min-width: 0; height: 20px; background: #2b2b2b; border-radius: 2px; }
    .cmd .result { flex: 763 1 0; margin: 0 7px 0 5px; }
    .cmd .lang { margin-right: 7px; }
  `;

  private menus(items: string[], label: string): TemplateResult {
    return html`<nav class="menus" aria-label=${label}>${items.map((m) => html`<button>${m}</button>`)}</nav>`;
  }
  private tools(names: string): TemplateResult[] {
    return names.split(" ").map((n) => {
      if (n === "|") return html`<span class="sep"></span>`;
      if (n === ">") return html`<span class="end"><svg class="ic" width="6" height="20" viewBox="0 0 6 20"><path d="M1 0v20" stroke="#7c7c7c" stroke-width="1.500" /><path d="M1 5l4 5-4 5z" fill="#7c7c7c" /></svg></span>`;
      return html`<button class=${classMap({ tool: true, on: n === "object" || n === "channelbox" })} aria-label=${n}>${icon(SMALL, n, 22)}</button>`;
    });
  }
  private combo(cls: string, label: string, value: string): TemplateResult {
    return html`<span class="combo ${cls}"><select aria-label=${label}><option>${value}</option></select><span class="drop">${down()}</span></span>`;
  }
  private shelfItem(n: string): TemplateResult {
    if (n === "|") return html`<span class="bar"></span>`;
    return html`<button class=${n === "smart" ? "smart" : ""} aria-label=${n}>${icon(SHELF, n, 28)}</button>`;
  }
  private toolButton(n: string, on: boolean): TemplateResult {
    return html`<button class=${classMap({ on })} aria-label=${n} @click=${() => (this.tool = n)}>${icon(TOOLS, n, 36)}</button>`;
  }

  private renderTop(): TemplateResult {
    return html`
      <header class="title row">
        <svg class="ic" width="15" height="17" viewBox="0 0 30 34" aria-hidden="true">${this.logo()}</svg>
        <h1>untitled* - Autodesk MAYA 2025.3: untitled</h1>
        <span class="grow"></span>
        <button aria-label="Minimize"><svg class="ic" width="10" height="10"><path d="M0 5.500h10" stroke="#000" /></svg></button>
        <button aria-label="Restore"><svg class="ic" width="10" height="10"><path d="M.5 2.500h7v7h-7zM2.500 2V.5h7v7H8" fill="none" stroke="#000" /></svg></button>
        <button aria-label="Close"><svg class="ic" width="10" height="10"><path d="M0 0l10 10M10 0L0 10" stroke="#000" stroke-width="1.200" /></svg></button>
      </header>
      <div class="menubar row">
        <button class="home" aria-label="Home">${icon(SMALL, "home", 22)}</button>
        ${this.menus(MENUS, "Main menu")}
        <span class="grow"></span>
        <div class="workspace row"><span>Workspace:</span>${this.combo("w-space", "Workspace", "General*")}<button aria-label="Lock workspace">${icon(MISC, "lock", 22, 20)}</button></div>
      </div>
      <div class="status row">
        <span class="grip"></span>
        ${this.combo("w-mode", "Menu set", "Modeling")}
        ${this.tools("| file open save undo redo > | hierarchy object component > | snapgrid snapcurve snappoint snapcenter snapplane makelive")}
        <button class="mini" aria-label="Live surface options">${down("#8a8a8a")}</button>
        <button class="field">No Live Surface</button>
        <span class="sep"></span>
        <button class="mini" aria-label="Symmetry options">${down("#8a8a8a")}</button>
        <button class="field">Symmetry: Off</button>
        ${this.tools("> | renderview render ipr rendersettings hypershade rendersetup layers lighteditor pause > |")}
        <div class="user row">
          <button>${icon(MISC, "person", 22, 20)}<span class="who">under valist</span>${down("#fff")}</button>
          <button>${icon(MISC, "clock", 22, 20)}<span>30</span></button>
        </div>
        <span class="grow"></span>
        ${this.tools("modeltool human attributes toolsettings channelbox")}
      </div>
      <div class="shelf">
        <span class="grip"></span>
        <div class="shelf-side"><button aria-label="Shelf tabs"><span class="bars"></span></button><button aria-label="Shelf settings">${icon(MISC, "gear", 22, 18)}</button></div>
        <div class="shelf-main">
          <div class="tabs" role="tablist">
            ${SHELF_TABS.map((t) => html`<button role="tab" class=${classMap({ tab: true, cur: t === this.shelf })} @click=${() => (this.shelf = t)}>${t}</button>`)}
          </div>
          <div class="shelf-items">
            ${SHELF_ITEMS.map((n) => this.shelfItem(n))}
            <span class="grow"></span>
            <div class="shelf-scroll">${arrow("up")}<span class="knob"></span>${arrow("down")}</div>
          </div>
        </div>
      </div>`;
  }

  private logo(): SVGTemplateResult {
    return svg`<path d="M0 4l5-3v22l-5 4z" fill="#7fcbe0"/><rect x="4" y="0" width="24" height="24" rx="1" fill="#35a3cf"/><path d="M3 23h26v8l-1 2H5l-2-2z" fill="#35687f"/>
      <text x="16" y="17" text-anchor="middle" font-size="15" font-weight="800" fill="#fff" font-family="Noto Sans, sans-serif">M</text>
      <text x="16" y="30" text-anchor="middle" font-size="6" font-weight="800" fill="#fff" font-family="Noto Sans, sans-serif">AYA</text>`;
  }

  private renderMain(): TemplateResult {
    return html`<div class="main">
      <div class="toolbox">
        <span class="grip"></span>
        ${["select", "lasso", "paint", "move", "rotate", "scale"].map((n) => this.toolButton(n, n === this.tool))}
        <span class="gap"></span><span class="rule"></span>
        ${["single", "four", "two", "outliner"].map((n) => this.toolButton(n, n === "outliner"))}
        <span class="rule"></span>
        ${this.toolButton("search", false)}
        <span class="grow"></span>
        <svg class="ic" width="30" height="34" viewBox="0 0 30 34" aria-hidden="true">${this.logo()}</svg>
      </div>

      <section class="outliner">
        <div class="tabs"><button class="tab cur">Outliner</button></div>
        ${this.menus(["Display", "Show", "Help"], "Outliner menu")}
        <div class="search-row row">
          <button aria-label="Filter">${icon(MISC, "filter", 22, 17)}</button>
          <span class="search row"><input aria-label="Search" placeholder="Search..." />${down()}</span>
        </div>
        <div class="tree">
          <ul>
            ${NODES.map((n) => html`<li class=${classMap({ dim: n.kind === "camera" })}>${icon(MISC, n.kind === "camera" ? "camnode" : "setnode", 22)}${n.name}</li>`)}
          </ul>
          <div class="vscroll">${arrow("up")}<span class="thumb"></span>${arrow("down")}</div>
          <div class="hscroll">${arrow("left")}<span class="thumb"></span>${arrow("right")}</div>
        </div>
        <span class="hgrip"></span>
      </section>

      <section class="viewport">
        ${this.menus(["View", "Shading", "Lighting", "Show", "Renderer", "Panels"], "Viewport menu")}
        <div class="vtools row">
          ${VIEW_ITEMS.map((n) =>
            n === "|" ? html`<span class="sep"></span>` : html`<button class=${n === "grid" || n === "solid" ? "on" : ""} aria-label=${n}>${icon(VIEW, n, 18, 18)}</button>`,
          )}
          <input class="num" aria-label="Exposure" value="0.00" />
          <button aria-label="gamma">${icon(VIEW, "gamma", 18, 18)}</button>
          <input class="num" aria-label="Gamma" value="1.00" />
          <button class="on toggle" aria-label="Color management">${icon(VIEW, "on", 18, 18)}</button>
          ${this.combo("w-view", "View transform", "ACES 1.0 SDR-video (sRGB)")}
        </div>
        <div class="canvas">
          <svg class="ic" width="400" height="220" viewBox="0 0 400 220" aria-hidden="true">
            <path d=${gridPath} fill="none" stroke="#414141" stroke-width="1" shape-rendering="crispEdges" />
            <path d=${axisPath} fill="none" stroke="#3c3c3c" stroke-width="1.600" />
          </svg>
          <svg class="viewcube" width="76" height="76" viewBox="0 0 76 76" aria-hidden="true">
            <path d="M38 5l33 11-3 39-30 18L8 55 5 16z" fill="#6c6c6c" />
            <path d="M38 5l31 10.500L38 28 7 15.500z" fill="#ababab" />
            <path d="M5.500 18L37 31v42L9 54.500z" fill="#9d9d9d" />
            <path d="M70.500 18L39 31v42l28-18.500z" fill="#939393" />
            <g font-family="Liberation Sans, sans-serif" font-weight="700" font-size="8" fill="#606468" text-anchor="middle">
              <text transform="matrix(.9 .38 0 1 21 47)">FRONT</text>
              <text transform="matrix(.9 -.38 0 1 55 47)">RIGHT</text>
              <text transform="matrix(.8 .3 -.8 .3 39 17)" font-size="9">TOP</text>
            </g>
          </svg>
          <svg class="gizmo" width="36" height="42" viewBox="0 0 36 42" aria-hidden="true">
            <path d="M17.500 26V14" stroke="#1f0" /><path d="M18 26l8 3" stroke="#f00" /><path d="M17 26l-7 3" stroke="#00f" />
            <g font-family="Noto Sans, sans-serif" font-weight="700" font-size="9" text-anchor="middle"><text x="17" y="12" fill="#1f0">y</text><text x="28" y="31" fill="#f00">x</text><text x="7" y="31" fill="#00f">z</text></g>
          </svg>
          <span class="camname">persp</span>
        </div>
      </section>

      <section class="channel">
        <div class="chan-top">
          <div class="chan-icons row">${["manip", "speed", "hyper"].map((n) => html`<button aria-label=${n}>${icon(MISC, n, 22, 16)}</button>`)}</div>
          ${this.menus(["Channels", "Edit", "Object", "Show"], "Channel box menu")}
          <p class="msg">Select objects in the scene to view, edit and set keyframes on channels (attributes)</p>
          <span class="hgrip"></span>
        </div>
        <div class="layers">
          <div class="tabs" role="tablist"><button role="tab" class="tab cur">Display</button><button role="tab" class="tab">Anim</button></div>
          ${this.menus(["Layers", "Options", "Help"], "Layer menu")}
          <div class="layer-icons row">${["layerup", "layerdown", "layeradd", "layersel"].map((n) => html`<button aria-label=${n}>${icon(MISC, n, 22, 22)}</button>`)}</div>
          <div class="layer-list"></div>
          <div class="hscroll">${arrow("left")}<span class="thumb"></span>${arrow("right")}</div>
        </div>
      </section>

      <div class="side" role="tablist">
        ${SIDE_TABS.map((t, i) => html`<button role="tab" class=${i === 0 ? "cur" : ""}>${t}</button>`)}
      </div>
    </div>`;
  }

  private renderBottom(): TemplateResult {
    return html`
      <div class="time">
        <span class="grip"></span>
        <div class="track">
          <div class="frames">
            <span></span>
            ${FRAMES.map((f) => html`<span class="frame">${f}</span>`)}
            <span class="now">1</span>
          </div>
        </div>
        <div class="play row">
          <input class="box" aria-label="Current frame" value="1" />
          ${["start", "back", "prevkey", "playback", "play", "nextkey", "forward", "end"].map((n) => html`<button aria-label=${n}>${icon(MISC, n, 22)}</button>`)}
        </div>
      </div>
      <div class="range">
        <span class="grip"></span>
        <input class="box" aria-label="Start frame" value="1" />
        <div class="slider"><div class="span row"><span class="handle"></span><span class="lo">1</span><span class="grip"></span><span class="hi">120</span><span class="handle"></span></div></div>
        <input class="box" aria-label="End frame" value="200" />
        <span class="sep"></span>
        <button class="mark" aria-label="Add bookmark">${icon(MISC, "bookmarkadd", 22)}</button>
        <span class="sep"></span>
        <button class="mini" aria-label="Character set options">${down("#8a8a8a")}</button>
        <button class="field">No Character Set</button>
        <button class="mini" aria-label="Anim layer options">${down("#8a8a8a")}</button>
        <button class="field">No Anim Layer</button>
        <span class="sep"></span>
        ${this.combo("w-fps", "Frame rate", "24 fps")}
        <button class="ricon loop" aria-label="loop">${icon(MISC, "loop", 22)}</button>
        <button class="cache on" aria-label="cached">${icon(MISC, "cached", 22)}</button>
        <span class="sep last"></span>
        ${["speaker", "evaluate", "runner"].map((n) => html`<button class="ricon" aria-label=${n}>${icon(MISC, n, 22)}</button>`)}
      </div>
      <div class="cmd">
        <span class="grip"></span>
        <div class="helpline">${icon(MISC, "help", 22, 20)}</div>
        <span class="split"></span>
        <span class="grip"></span>
        <label class="lang" for="mel">MEL</label>
        <input class="entry" id="mel" />
        <input class="entry result" aria-label="Result" readonly />
        <button aria-label="Script editor">${icon(MISC, "script", 22)}</button>
      </div>`;
  }

  render() {
    return html`${this.renderTop()}${this.renderMain()}${this.renderBottom()}`;
  }
}
